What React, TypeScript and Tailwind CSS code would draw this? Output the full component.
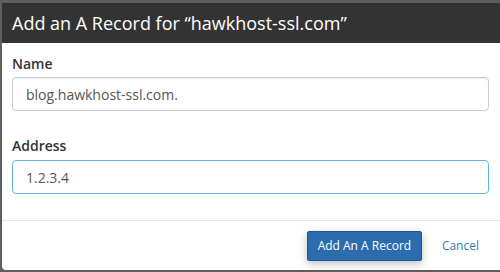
export default function App() {
  return (
    <div
      className="w-[500px] h-[272px] bg-[#5e5e5e] pt-[3px] pl-[2px] pb-[2px] overflow-hidden"
      style={{ fontFamily: '"Open Sans", "Liberation Sans", sans-serif' }}
    >
      <div className="h-full bg-white rounded-bl-[4px] flex flex-col overflow-hidden">
        <div className="h-[40px] shrink-0 bg-[#333333] px-[10px] flex items-center">
          <h2 className="text-[18px] leading-[24px] text-white">
            Add an A Record for “hawkhost-ssl.com”
          </h2>
        </div>

        <div className="px-[10px] pt-[11px] pb-[26px] pr-[11px]">
          <label className="block text-[14px] leading-[20px] font-semibold text-[#333] mb-[3px]">Name</label>
          <div className="h-[34px] border border-[#cccccc] rounded-[4px] px-[13px] flex items-center text-[14px] text-[#555] shadow-[inset_0_1px_1px_rgba(0,0,0,0.075)]">
            blog.hawkhost-ssl.com.
          </div>

          <label className="block text-[14px] leading-[20px] font-semibold text-[#333] mt-[25px] mb-[4px]">Address</label>
          <div className="h-[34px] border border-[#66afe9] rounded-[4px] px-[13px] flex items-center text-[14px] text-[#555]">
            1.2.3.4
          </div>
        </div>

        <div className="border-t border-[#e5e5e5] flex-1 flex justify-end items-start pt-[10px] pr-[9px] gap-[8px]">
          <button className="h-[30px] w-[115px] bg-[#2b6cae] border border-[#22578c] rounded-[2px] text-white text-[12px] shadow-[0_3px_8px_rgba(0,0,0,0.25)]">
            Add An A Record
          </button>
          <button className="h-[30px] px-[12px] text-[12px] text-[#337ab7]">Cancel</button>
        </div>
      </div>
    </div>
  );
}
